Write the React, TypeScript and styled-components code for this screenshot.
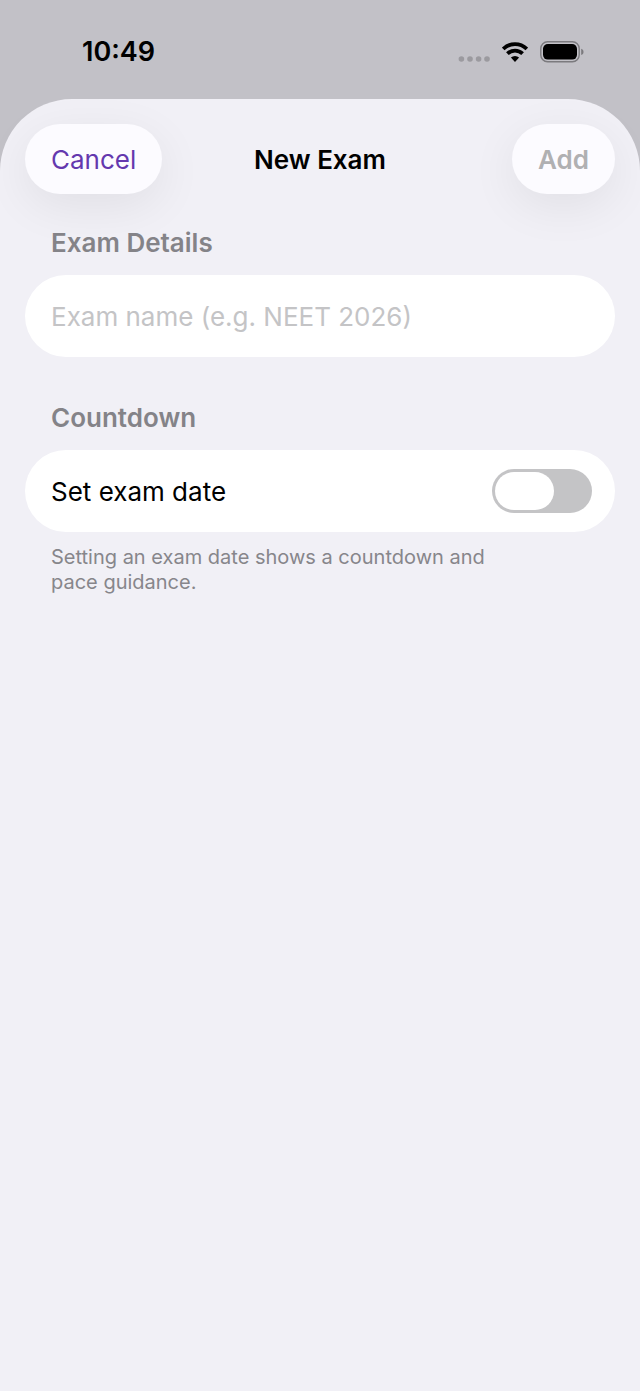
import React, { useState } from "react";
import styled, { createGlobalStyle } from "styled-components";

const GlobalStyle = createGlobalStyle`
  *, *::before, *::after { box-sizing: border-box; }
  html, body, #root { height: 100%; }
  body {
    margin: 0;
    background: #c2c1c7;
    color: #000;
    font-family: Inter, "Liberation Sans", sans-serif;
    font-size: 26px;
    line-height: 32px;
  }
  button, input { font: inherit; }
`;

const Screen = styled.div`
  display: flex;
  flex-direction: column;
  min-height: 100%;
`;

const StatusBar = styled.div`
  display: flex;
  align-items: center;
  justify-content: space-between;
  height: 99px;
  padding: 4px 56px 0 82px;
`;

const Clock = styled.time`
  font-size: 27px;
  font-weight: 600;
`;

const StatusIcons = styled.div`
  display: flex;
  align-items: center;
  gap: 12px;

  svg { display: block; }
`;

const Sheet = styled.main`
  flex: 1;
  padding: 25px 25px 48px;
  border-radius: 72px 72px 0 0;
  background: #f1f0f6;
`;

const NavBar = styled.header`
  display: grid;
  grid-template-columns: 1fr auto 1fr;
  align-items: center;
`;

const Title = styled.h1`
  margin: 0;
  padding-top: 2px;
  font-size: 26px;
  font-weight: 600;
`;

const PillButton = styled.button<{ $end?: boolean }>`
  justify-self: ${(p) => (p.$end ? "end" : "start")};
  height: 70px;
  padding: 2px 26px 0;
  border: 0;
  border-radius: 35px;
  background: #fcfbff;
  box-shadow: 0 12px 48px rgba(0, 0, 0, 0.07);
  color: #6438ae;

  &:disabled {
    color: #b0b0b2;
    font-weight: 600;
  }
`;

const Section = styled.section`
  padding-top: 33px;

  & + & { padding-top: 45px; }
`;

const SectionTitle = styled.h2`
  margin: 0 26px 16px;
  color: #848388;
  font-size: 26px;
  font-weight: 600;
`;

const Card = styled.div`
  display: flex;
  align-items: center;
  justify-content: space-between;
  height: 82px;
  padding: 0 23px 0 26px;
  border-radius: 41px;
  background: #fff;

  label { padding-top: 2px; }
`;

const TextField = styled.input`
  flex: 1;
  min-width: 0;
  padding: 2px 0 0;
  border: 0;
  outline: 0;
  background: transparent;
  color: #000;

  &::placeholder { color: #c4c4c6; opacity: 1; }
`;

const Switch = styled.input`
  display: flex;
  align-items: center;
  width: 100px;
  height: 44px;
  margin: 0;
  padding: 3px;
  border-radius: 22px;
  background: #c4c4c6;
  appearance: none;

  &::before {
    content: "";
    width: 59px;
    height: 38px;
    border-radius: 19px;
    background: #fff;
  }

  &:checked {
    justify-content: flex-end;
    background: #6438ae;
  }
`;

const Footnote = styled.p`
  max-width: 460px;
  margin: 13px 26px 0;
  color: #87868b;
  font-size: 20px;
  line-height: 25px;
`;

function SignalDots() {
  return (
    <svg width="32" height="22" viewBox="0 0 32 22" fill="#9b9a9f" aria-hidden="true">
      <circle cx="3.4" cy="18" r="2.8" />
      <circle cx="12" cy="18" r="2.8" />
      <circle cx="20.6" cy="18" r="2.8" />
      <circle cx="29" cy="18" r="2.8" />
    </svg>
  );
}

function WifiIcon() {
  return (
    <svg width="26" height="20" viewBox="0 0 26 20" aria-hidden="true">
      <g fill="none" stroke="#000" strokeWidth="3.8">
        <path d="M1.2 6.9a17 17 0 0 1 23.6 0" />
        <path d="M5.4 11.7a10.9 10.9 0 0 1 15.2 0" />
      </g>
      <path d="M13 20l-4.1-4.4a6 6 0 0 1 8.2 0z" fill="#000" />
    </svg>
  );
}

function BatteryIcon() {
  return (
    <svg width="44" height="22" viewBox="0 0 44 22" aria-hidden="true">
      <rect x="0.8" y="0.8" width="38.4" height="20" rx="6.8" fill="none" stroke="#7b7a7e" strokeWidth="1.4" />
      <rect x="3" y="3" width="34" height="15.6" rx="4.8" fill="#000" />
      <path d="M41.2 7.8c1.5.5 2.3 1.7 2.3 3.1s-.8 2.6-2.3 3.1z" fill="#7b7a7e" />
    </svg>
  );
}

export default function App() {
  const [name, setName] = useState("");
  const [hasDate, setHasDate] = useState(false);

  return (
    <>
      <GlobalStyle />
      <Screen>
        <StatusBar>
          <Clock>10:49</Clock>
          <StatusIcons>
            <SignalDots />
            <WifiIcon />
            <BatteryIcon />
          </StatusIcons>
        </StatusBar>
        <Sheet>
          <NavBar>
            <PillButton type="button">Cancel</PillButton>
            <Title>New Exam</Title>
            <PillButton type="button" $end disabled={!name}>
              Add
            </PillButton>
          </NavBar>
          <Section>
            <SectionTitle id="details">Exam Details</SectionTitle>
            <Card>
              <TextField
                type="text"
                aria-labelledby="details"
                placeholder="Exam name (e.g. NEET 2026)"
                value={name}
                onChange={(e) => setName(e.target.value)}
              />
            </Card>
          </Section>
          <Section>
            <SectionTitle>Countdown</SectionTitle>
            <Card>
              <label htmlFor="exam-date">Set exam date</label>
              <Switch
                id="exam-date"
                type="checkbox"
                role="switch"
                checked={hasDate}
                onChange={(e) => setHasDate(e.target.checked)}
              />
            </Card>
            <Footnote>Setting an exam date shows a countdown and pace guidance.</Footnote>
          </Section>
        </Sheet>
      </Screen>
    </>
  );
}
